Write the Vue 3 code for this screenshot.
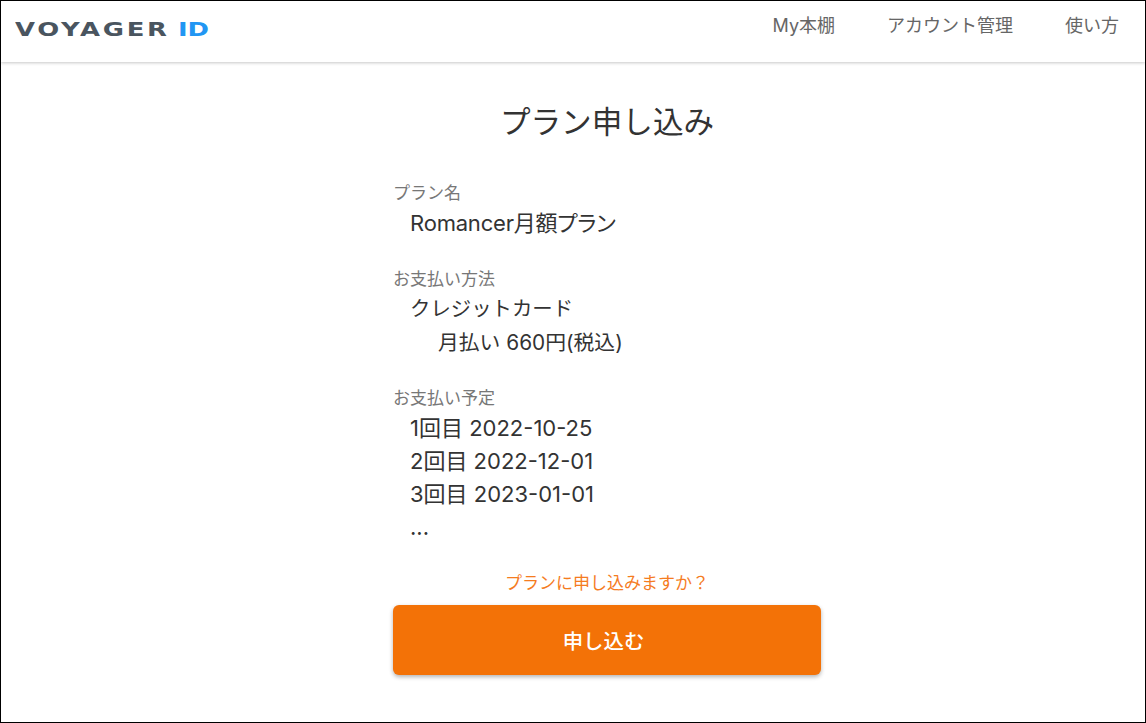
<template>
  <div class="page">
    <header class="app-bar">
      <div class="logo">VOYAGER <span class="logo-id">ID</span></div>
      <nav class="nav">
        <a v-for="item in navItems" :key="item" class="nav-item">{{ item }}</a>
      </nav>
    </header>

    <main class="content">
      <div class="form">
        <h1 class="title">プラン申し込み</h1>

        <section class="block plan">
          <div class="label">プラン名</div>
          <div class="value plan-name">Romancer月額プラン</div>
        </section>

        <section class="block method">
          <div class="label">お支払い方法</div>
          <div class="value kana">クレジットカード</div>
          <div class="value sub">月払い 660円(税込)</div>
        </section>

        <section class="block schedule">
          <div class="label">お支払い予定</div>
          <div v-for="row in schedule" :key="row" class="value">{{ row }}</div>
        </section>

        <p class="confirm">プランに申し込みますか？</p>
        <button class="submit" type="button">申し込む</button>
      </div>
    </main>
  </div>
</template>

<script setup>
const navItems = ['My本棚', 'アカウント管理', '使い方']
const schedule = ['1回目 2022-10-25', '2回目 2022-12-01', '3回目 2023-01-01', '...']
</script>

<style>
html, body {
  margin: 0;
  background: #fff;
}
</style>

<style scoped>
.page {
  box-sizing: border-box;
  width: 1146px;
  height: 723px;
  border: 1px solid #000;
  overflow: hidden;
  background: #fff;
  color: #333;
  font-family: Inter, "Noto Sans CJK JP", sans-serif;
}

.app-bar {
  height: 61px;
  display: flex;
  align-items: center;
  justify-content: space-between;
  padding: 0 26px 0 14px;
  box-shadow: 0 1px 3px rgba(0, 0, 0, 0.22);
}

.logo {
  font-family: "DejaVu Sans", sans-serif;
  font-weight: 700;
  font-size: 19px;
  letter-spacing: 2px;
  word-spacing: -2.5px;
  color: #4a555f;
  white-space: nowrap;
  transform: scaleX(1.36);
  transform-origin: left center;
  margin-top: -6px;
}

.logo-id {
  color: #2196f3;
  letter-spacing: 0;
}

.nav {
  display: flex;
  gap: 52px;
  margin-top: -16px;
}

.nav-item {
  font-size: 18px;
  color: #666;
}

.content {
  display: flex;
  justify-content: center;
  padding-left: 68px;
}

.form {
  width: 428px;
}

.title {
  margin: 40px 0 0;
  height: 40px;
  line-height: 40px;
  font-size: 30.6px;
  font-weight: 400;
  text-align: center;
  color: #333;
}

.block {
  margin-top: 27px;
}

.plan {
  margin-top: 39px;
}

.label {
  margin-bottom: 1px;
  font-size: 17px;
  line-height: 24px;
  color: #777;
}

.plan .label,
.schedule .label {
  margin-bottom: 2px;
}

.value {
  margin-left: 17px;
  font-size: 22px;
  font-feature-settings: "palt";
  line-height: 33px;
  color: #333;
}

.plan-name {
  letter-spacing: -0.2px;
}

.kana {
  font-size: 20.4px;
  font-feature-settings: normal;
}

.sub {
  margin-top: 1px;
  margin-left: 45px;
  font-size: 20.8px;
  font-feature-settings: normal;
}

.confirm {
  margin: 27px 0 0;
  font-size: 17px;
  line-height: 24px;
  text-align: center;
  color: #f57c1f;
}

.submit {
  display: block;
  width: 100%;
  height: 70px;
  margin-top: 10px;
  padding: 0 7px 0 0;
  border: none;
  border-radius: 6px;
  background: #f37207;
  color: #fff;
  font-family: inherit;
  font-size: 20.4px;
  font-weight: 500;
  box-shadow: 0 2px 4px rgba(0, 0, 0, 0.3);
}
</style>
